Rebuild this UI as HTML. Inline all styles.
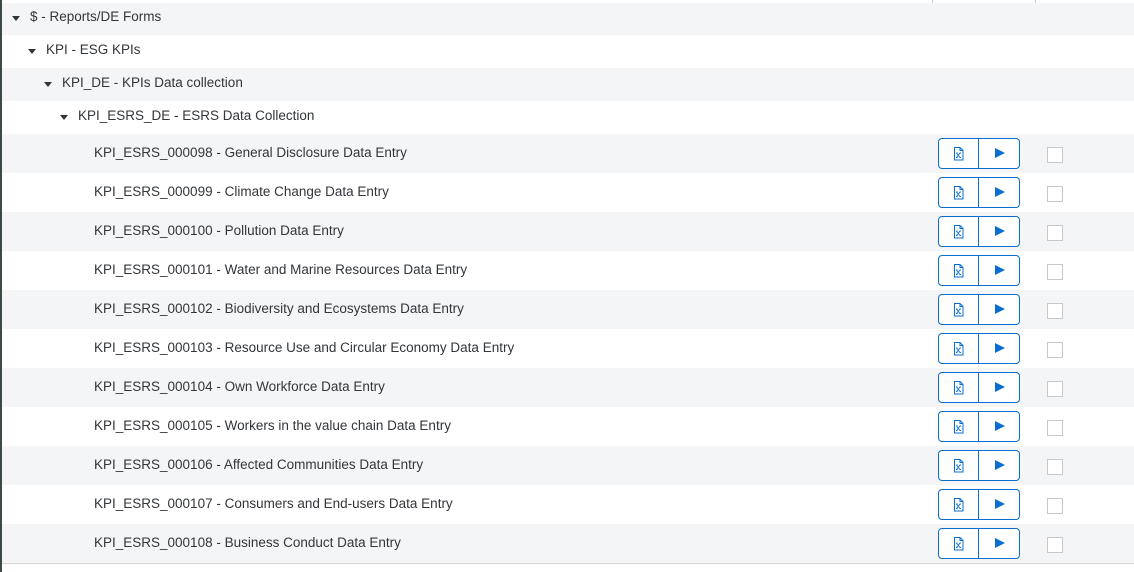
<!DOCTYPE html>
<html><head><style>
body{margin:0;width:1134px;height:572px;background:#fff;font-family:"Liberation Sans",sans-serif;font-size:13.5px;color:#32363a;position:relative;overflow:hidden}
.lb{position:absolute;left:0;top:0;width:2px;height:572px;background:#3d4a44}
.row{position:absolute;left:2px;right:0;}
.g{background:#f4f5f6}
.t{position:absolute;white-space:nowrap}
.tri{position:absolute;width:0;height:0;border-left:4px solid transparent;border-right:4px solid transparent;border-top:5px solid #32363a}
.btn{position:absolute;left:938px;width:82px;height:30px;}
.b1,.b2{position:absolute;top:0;height:29px;border:1px solid #0a6ed1;background:#fff}
.b1{left:0;width:39px;border-radius:4px 0 0 4px}
.b2{left:40px;width:40px;border-radius:0 4px 4px 0;border-left:1px solid #0a6ed1}
.play{position:absolute;left:16px;top:9px;width:0;height:0;border-top:5px solid transparent;border-bottom:5px solid transparent;border-left:10px solid #0a6ed1}
.cb{position:absolute;left:1047px;width:14px;height:14px;border:1px solid #c8c8c8;background:#fff}
</style></head><body>
<div class="lb"></div>
<div style="position:absolute;left:932px;top:0;width:1px;height:3px;background:#ccc"></div>
<div style="position:absolute;left:1035px;top:0;width:1px;height:3px;background:#ccc"></div>
<div style="position:absolute;left:2px;right:0;top:563px;height:1px;background:#d5d5d5"></div>

<div class="row g" style="top:3px;height:32px"></div>
<div class="tri" style="left:12px;top:16px"></div><div class="t" style="left:30px;top:9px">$ - Reports/DE Forms</div>
<div class="tri" style="left:28px;top:49px"></div><div class="t" style="left:46px;top:42px">KPI - ESG KPIs</div>
<div class="row g" style="top:68px;height:33px"></div>
<div class="tri" style="left:44px;top:82px"></div><div class="t" style="left:62px;top:75px">KPI_DE - KPIs Data collection</div>
<div class="tri" style="left:60px;top:115px"></div><div class="t" style="left:78px;top:108px">KPI_ESRS_DE - ESRS Data Collection</div>

<div id="rows"></div>
<script>
var names=["KPI_ESRS_000098 - General Disclosure Data Entry","KPI_ESRS_000099 - Climate Change Data Entry","KPI_ESRS_000100 - Pollution Data Entry","KPI_ESRS_000101 - Water and Marine Resources Data Entry","KPI_ESRS_000102 - Biodiversity and Ecosystems Data Entry","KPI_ESRS_000103 - Resource Use and Circular Economy Data Entry","KPI_ESRS_000104 - Own Workforce Data Entry","KPI_ESRS_000105 - Workers in the value chain Data Entry","KPI_ESRS_000106 - Affected Communities Data Entry","KPI_ESRS_000107 - Consumers and End-users Data Entry","KPI_ESRS_000108 - Business Conduct Data Entry"];
var h="";
for(var i=0;i<names.length;i++){var y=134+i*39;
if(i%2==0)h+='<div class="row g" style="top:'+y+'px;height:39px"></div>';
h+='<div class="t" style="left:94px;top:'+(y+11)+'px">'+names[i]+'</div>';
h+='<div class="btn" style="top:'+(y+4)+'px"><div class="b1"><svg width="39" height="29" viewBox="0 0 39 29"><path d="M15.5 8.5h5.5l3 3v9.5h-8.5z M21 8.5v3h3" fill="none" stroke="#0a6ed1" stroke-width="1"/><path d="M17.5 14l3.5 4.5 M21 14l-3.5 4.5 M17 14h1.5 M20.5 14h1.5 M17 18.5h1.5 M20.5 18.5h1.5" stroke="#0a6ed1" stroke-width="0.9" fill="none"/></svg></div><div class="b2"><div class="play"></div></div></div>';
h+='<div class="cb" style="top:'+(y+13)+'px"></div>';}
document.getElementById("rows").innerHTML=h;
</script>
</body></html>
